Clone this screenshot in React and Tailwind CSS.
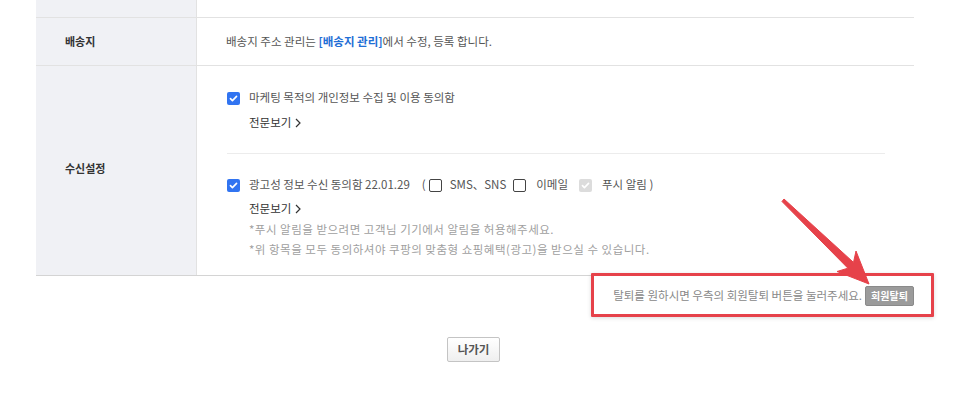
import React from 'react';

const font = { fontFamily: '"Noto Sans CJK KR", "Noto Sans", sans-serif' };

const CheckOn = ({ disabled }) => (
  <span
    className={`inline-flex items-center justify-center w-[13px] h-[13px] rounded-[2px] shrink-0 ${
      disabled ? 'bg-[#dcdcdc]' : 'bg-[#3174f1]'
    }`}
  >
    <svg width="9" height="9" viewBox="0 0 10 10">
      <path d="M1.6 5.2l2.2 2.2 4.6-4.8" fill="none" stroke="#fff" strokeWidth="1.8" strokeLinecap="round" strokeLinejoin="round" />
    </svg>
  </span>
);

const CheckOff = () => (
  <span className="inline-block w-[13px] h-[13px] rounded-[2px] border border-[#444] bg-white shrink-0"></span>
);

const ViewAll = () => (
  <div className="h-[20px] flex items-center pl-[22px] text-[11.5px] text-[#333]">
    전문보기
    <svg className="ml-[4px]" width="6" height="10" viewBox="0 0 6 10">
      <path d="M1 1l4 4-4 4" fill="none" stroke="#333" strokeWidth="1.2" />
    </svg>
  </div>
);

export default function App() {
  return (
    <div className="relative w-[954px] h-[398px] bg-white overflow-hidden" style={font}>
      {/* info table */}
      <div className="ml-[36px] w-[878px] border-b border-[#d4d4d4]">
        <div className="flex h-[18px] border-b border-[#e2e2e2]">
          <div className="w-[161px] bg-[#f0f1f5] border-r border-[#e2e2e2]"></div>
          <div className="flex-1"></div>
        </div>
        <div className="flex h-[48px] border-b border-[#e2e2e2]">
          <div className="w-[161px] bg-[#f0f1f5] border-r border-[#e2e2e2] flex items-center pl-[29px] text-[11px] font-bold text-[#333]">
            배송지
          </div>
          <div className="flex-1 flex items-center pl-[29px] text-[11.5px] text-[#555]">
            배송지 주소 관리는&nbsp;<span className="font-bold text-[#1f6fd6]">[배송지 관리]</span>에서 수정, 등록 합니다.
          </div>
        </div>
        <div className="flex h-[209px]">
          <div className="w-[161px] bg-[#f0f1f5] border-r border-[#e2e2e2] flex items-center pl-[29px] pb-[4px] text-[11px] font-bold text-[#333]">
            수신설정
          </div>
          <div className="flex-1 pl-[30px] pr-[29px] pt-[22px]">
            <div className="h-[20px] flex items-center gap-[9px] text-[11.5px] text-[#555]">
              <CheckOn />
              마케팅 목적의 개인정보 수집 및 이용 동의함
            </div>
            <div className="mt-[5px]">
              <ViewAll />
            </div>
            <div className="mt-[20px] border-t border-[#ececec]"></div>
            <div className="mt-[21px] h-[20px] flex items-center text-[11.5px] text-[#555]">
              <CheckOn />
              <span className="ml-[9px]">광고성 정보 수신 동의함 22.01.29</span>
              <span className="ml-[12px]">(</span>
              <span className="ml-[3px] flex"><CheckOff /></span>
              <span className="ml-[8px]">SMS、SNS</span>
              <span className="ml-[7px] flex"><CheckOff /></span>
              <span className="ml-[10px]">이메일</span>
              <span className="ml-[11px] flex"><CheckOn disabled /></span>
              <span className="ml-[10px]">푸시 알림 )</span>
            </div>
            <div className="mt-[4px]">
              <ViewAll />
            </div>
            <div className="pl-[22px] text-[11.5px] tracking-[0.5px] leading-[20px] text-[#a0a0a0]">
              <p>*푸시 알림을 받으려면 고객님 기기에서 알림을 허용해주세요.</p>
              <p>*위 항목을 모두 동의하셔야 쿠팡의 맞춤형 쇼핑혜택(광고)을 받으실 수 있습니다.</p>
            </div>
          </div>
        </div>
      </div>

      {/* withdraw row */}
      <div className="ml-[36px] w-[878px] mt-[10px] flex items-center justify-end gap-[3px]">
        <span className="text-[11.5px] text-[#888]">탈퇴를 원하시면 우측의 회원탈퇴 버튼을 눌러주세요.</span>
        <button className="w-[49px] h-[20px] bg-[#9b9b9b] border border-[#8a8a8a] rounded-[2px] text-[10px] font-bold text-white leading-none">
          회원탈퇴
        </button>
      </div>

      {/* exit button */}
      <div className="mt-[31px] flex justify-center">
        <button className="ml-[-7px] w-[53px] h-[25px] rounded-[2px] border border-[#c4c4c4] bg-gradient-to-b from-white to-[#efefef] text-[11.5px] font-bold text-[#555]">
          나가기
        </button>
      </div>

      {/* annotation overlay */}
      <div className="absolute left-[591px] top-[273px] w-[343px] h-[44px] border-[3px] border-[#e6424a] rounded-[1px] shadow-[0_1px_4px_rgba(0,0,0,0.15)] pointer-events-none"></div>
      <svg className="absolute left-0 top-0 pointer-events-none" width="954" height="398" viewBox="0 0 954 398">
        <polygon
          points="784,199 853.5,262.4 856,251 869,284 837,271.5 847.9,268.2 782,201.5"
          fill="#e6424a"
          stroke="#e6424a"
          strokeWidth="1"
          strokeLinejoin="round"
        />
      </svg>
    </div>
  );
}
